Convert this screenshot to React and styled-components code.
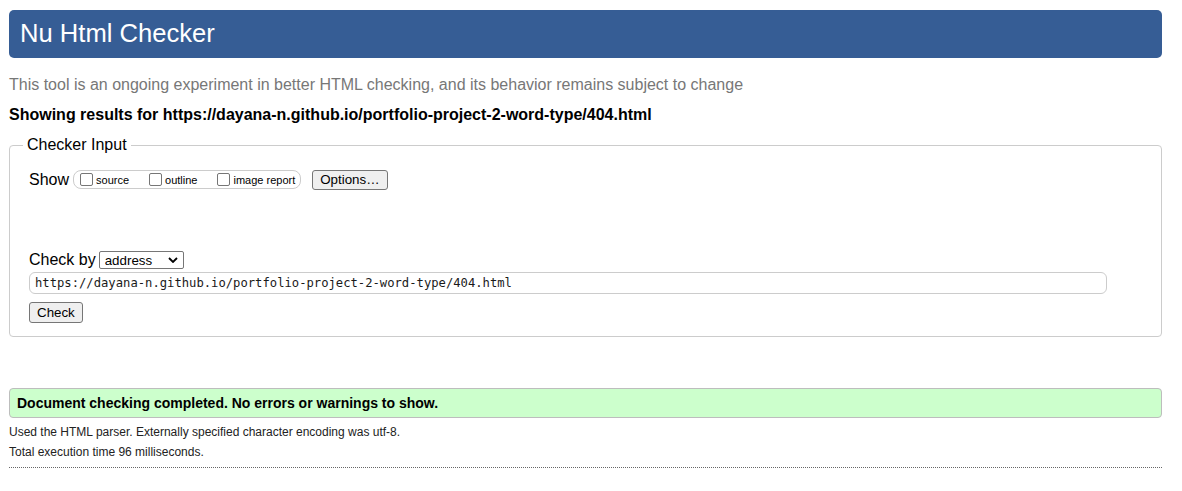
import React from 'react'
import styled, {createGlobalStyle} from 'styled-components'

const GlobalStyle = createGlobalStyle`
  html, body {
    margin: 0;
    padding: 0;
    background: #fff;
  }

  body {
    font-family: "Liberation Sans", Arial, sans-serif;
    font-size: 16px;
    color: #000;
  }
`

const Page = styled.div`
  padding: 10px 20px 20px 9px;
`

const Header = styled.h1`
  margin: 0;
  height: 48px;
  padding: 0 11px;
  line-height: 46px;
  font-size: 25.6px;
  font-weight: normal;
  color: #fff;
  background: #365d95;
  border-radius: 5px;
`

const About = styled.p`
  margin: 18px 0 0;
  line-height: 18px;
  color: #777;
`

const Results = styled.p`
  margin: 12px 0 0;
  line-height: 18px;
  font-weight: bold;
`

const Fieldset = styled.fieldset`
  margin: 11px 0 0;
  padding: 14px 19px 13px 19px;
  border: 1px solid #ccc;
  border-radius: 4px;
  min-width: 0;
`

const Legend = styled.legend`
  margin-left: -6px;
  padding: 1px 4px 1px;
  line-height: 18px;
`

const Row = styled.div`
  display: flex;
  align-items: center;
  height: ${p => p.$h}px;
  margin-top: ${p => p.$top || 0}px;
`

const Label = styled.span`
  line-height: 18px;
`

const OptionBox = styled.span`
  display: flex;
  align-items: center;
  gap: 20px;
  height: 17px;
  margin-left: 4px;
  padding: 0 5px 0 6px;
  border: 1px solid #ccc;
  border-radius: 8px;
`

const Option = styled.label`
  display: flex;
  align-items: center;
  gap: 3px;
  font-size: 11px;
  line-height: 13px;
  padding-top: 1px;
`

const Checkbox = styled.input.attrs({type: 'checkbox'})`
  appearance: none;
  margin: 0;
  width: 13px;
  height: 13px;
  border: 1px solid #767676;
  border-radius: 2px;
  background: #fff;
  box-sizing: border-box;
  position: relative;
  top: -1px;
`

const Button = styled.button`
  height: ${p => p.$h || 20}px;
  margin-left: ${p => p.$left || 0}px;
  padding: 0 7px;
  font-family: "Liberation Sans", Arial, sans-serif;
  font-size: 13.33px;
  color: #000;
  background: #efefef;
  border: 1px solid #767676;
  border-radius: 3px;
`

const SelectWrap = styled.span`
  position: relative;
  display: inline-flex;
  margin-left: 3px;
`

const Select = styled.select`
  appearance: none;
  width: 85px;
  height: 18px;
  margin: 0;
  padding: 0 0 0 5px;
  font-family: "Liberation Sans", Arial, sans-serif;
  font-size: 13.33px;
  color: #000;
  background: #fff;
  border: 1px solid #767676;
  border-radius: 2px;
`

const Chevron = styled.svg`
  position: absolute;
  right: 6px;
  top: 6px;
  pointer-events: none;
`

const UrlInput = styled.input`
  display: block;
  box-sizing: border-box;
  width: calc(100% - 35px);
  height: 22px;
  margin: 3px 0 0;
  padding: 0 5px;
  font-family: "DejaVu Sans Mono", Consolas, monospace;
  font-size: 12.2px;
  color: #1a1a1a;
  border: 1px solid #ccc;
  border-radius: 6px;
  outline: none;
`

const Notice = styled.div`
  margin-top: 51px;
  height: 28px;
  padding: 0 7px;
  line-height: 28px;
  font-size: 14px;
  font-weight: bold;
  background: #ccffcc;
  border: 1px solid #bdbdbd;
  border-radius: 4px;
`

const Details = styled.p`
  margin: ${p => p.$top || 0}px 0 0;
  font-size: 12px;
  line-height: 20px;
  color: #222;
`

const Rule = styled.hr`
  margin: 5px 0 0;
  border: 0;
  border-top: 1px dotted #666;
`

const url = 'https://dayana-n.github.io/portfolio-project-2-word-type/404.html'

export default function App() {
	return (
		<Page>
			<GlobalStyle/>
			<Header>Nu Html Checker</Header>
			<About>This tool is an ongoing experiment in better HTML checking, and its behavior remains subject to change</About>
			<Results>Showing results for {url}</Results>

			<Fieldset>
				<Legend>Checker Input</Legend>
				<Row $h={21}>
					<Label>Show</Label>
					<OptionBox>
						<Option><Checkbox/>source</Option>
						<Option><Checkbox/>outline</Option>
						<Option><Checkbox/>image report</Option>
					</OptionBox>
					<Button $left={11}>Options…</Button>
				</Row>

				<Row $h={18} $top={61}>
					<Label>Check by</Label>
					<SelectWrap>
						<Select defaultValue="address">
							<option value="address">address</option>
							<option value="file">file upload</option>
							<option value="text">text input</option>
						</Select>
						<Chevron width="10" height="6" viewBox="0 0 10 6">
							<path d="M1 1l4 4 4-4" fill="none" stroke="#000" strokeWidth="1.8"/>
						</Chevron>
					</SelectWrap>
				</Row>
				<UrlInput defaultValue={url}/>
				<Row $h={21} $top={8}>
					<Button $h={21}>Check</Button>
				</Row>
			</Fieldset>

			<Notice>Document checking completed. No errors or warnings to show.</Notice>
			<Details $top={4}>Used the HTML parser. Externally specified character encoding was utf-8.</Details>
			<Details>Total execution time 96 milliseconds.</Details>
			<Rule/>
		</Page>
	)
}
